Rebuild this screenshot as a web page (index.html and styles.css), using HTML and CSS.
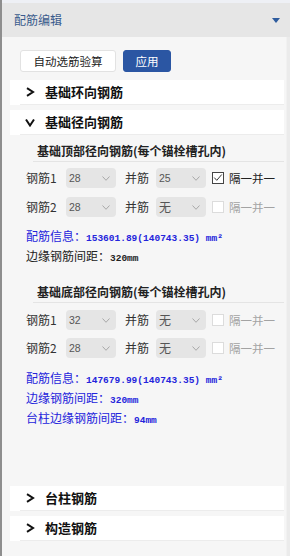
FILE: index.html
```html
<!DOCTYPE html>
<html lang="zh">
<head>
  <meta charset="UTF-8">
  <title>配筋编辑</title>
  <link rel="stylesheet" href="styles.css">
</head>
<body>
  <div class="frame">
    <div class="top-strip"></div>

    <!-- パネルヘッダー -->
    <div class="panel-head">
      <span class="panel-title">配筋编辑</span>
      <svg class="panel-caret" viewBox="0 0 8 5" width="8" height="5"><path d="M0 0H8L4 5Z" fill="currentColor"/></svg>
    </div>

    <div class="panel-wrap">
      <div class="panel-body">
        <div class="toolbar">
          <button class="btn">自动选筋验算</button>
          <button class="btn btn-primary">应用</button>
        </div>

        <!-- 基础环向钢筋 -->
        <div class="sec">
          <div class="sec-head">
            <div class="sec-title">
              <svg class="chev" viewBox="0 0 9 10" width="9" height="10"><polyline points="1.5,1.2 7.5,5 1.5,8.8" fill="none" stroke="currentColor" stroke-width="2"/></svg>
              <span>基础环向钢筋</span>
            </div>
          </div>
        </div>

        <!-- 基础径向钢筋 -->
        <div class="sec">
          <div class="sec-head">
            <div class="sec-title">
              <svg class="chev" viewBox="0 0 10 9" width="10" height="9"><polyline points="1,1.5 5,7.5 9,1.5" fill="none" stroke="currentColor" stroke-width="2"/></svg>
              <span>基础径向钢筋</span>
            </div>
          </div>
          <div class="sec-body">
            <div class="sub-head">基础顶部径向钢筋(每个锚栓槽孔内)</div>
            <div class="form-row first">
              <span class="lbl">钢筋1</span>
              <div class="sel"><span class="val">28</span><svg viewBox="0 0 8 5" width="8" height="5"><polyline points="0.5,0.5 4,4.3 7.5,0.5" fill="none" stroke="#a8a8a8"/></svg></div>
              <span class="lbl2">并筋</span>
              <div class="sel"><span class="val">25</span><svg viewBox="0 0 8 5" width="8" height="5"><polyline points="0.5,0.5 4,4.3 7.5,0.5" fill="none" stroke="#a8a8a8"/></svg></div>
              <span class="chk on"><svg viewBox="0 0 12 12" width="10" height="10"><polyline points="1.5,5.5 4.5,8.8 10.5,1.8" fill="none" stroke="#333" stroke-width="1.2"/></svg></span>
              <span class="chk-text">隔一并一</span>
            </div>
            <div class="form-row">
              <span class="lbl">钢筋2</span>
              <div class="sel"><span class="val">28</span><svg viewBox="0 0 8 5" width="8" height="5"><polyline points="0.5,0.5 4,4.3 7.5,0.5" fill="none" stroke="#a8a8a8"/></svg></div>
              <span class="lbl2">并筋</span>
              <div class="sel"><span class="val cn">无</span><svg viewBox="0 0 8 5" width="8" height="5"><polyline points="0.5,0.5 4,4.3 7.5,0.5" fill="none" stroke="#a8a8a8"/></svg></div>
              <span class="chk"></span>
              <span class="chk-text off">隔一并一</span>
            </div>
            <div class="info blue first">配筋信息：<span class="num">153601.89(140743.35) mm²</span></div>
            <div class="info">边缘钢筋间距：<span class="num">320mm</span></div>

            <div class="sub-head second">基础底部径向钢筋(每个锚栓槽孔内)</div>
            <div class="form-row first">
              <span class="lbl">钢筋1</span>
              <div class="sel"><span class="val">32</span><svg viewBox="0 0 8 5" width="8" height="5"><polyline points="0.5,0.5 4,4.3 7.5,0.5" fill="none" stroke="#a8a8a8"/></svg></div>
              <span class="lbl2">并筋</span>
              <div class="sel"><span class="val cn">无</span><svg viewBox="0 0 8 5" width="8" height="5"><polyline points="0.5,0.5 4,4.3 7.5,0.5" fill="none" stroke="#a8a8a8"/></svg></div>
              <span class="chk"></span>
              <span class="chk-text off">隔一并一</span>
            </div>
            <div class="form-row tight">
              <span class="lbl">钢筋2</span>
              <div class="sel"><span class="val">28</span><svg viewBox="0 0 8 5" width="8" height="5"><polyline points="0.5,0.5 4,4.3 7.5,0.5" fill="none" stroke="#a8a8a8"/></svg></div>
              <span class="lbl2">并筋</span>
              <div class="sel"><span class="val cn">无</span><svg viewBox="0 0 8 5" width="8" height="5"><polyline points="0.5,0.5 4,4.3 7.5,0.5" fill="none" stroke="#a8a8a8"/></svg></div>
              <span class="chk"></span>
              <span class="chk-text off">隔一并一</span>
            </div>
            <div class="info blue first low">配筋信息：<span class="num">147679.99(140743.35) mm²</span></div>
            <div class="info blue">边缘钢筋间距：<span class="num">320mm</span></div>
            <div class="info blue">台柱边缘钢筋间距：<span class="num">94mm</span></div>
          </div>
        </div>

        <!-- 台柱钢筋 -->
        <div class="sec">
          <div class="sec-head">
            <div class="sec-title">
              <svg class="chev" viewBox="0 0 9 10" width="9" height="10"><polyline points="1.5,1.2 7.5,5 1.5,8.8" fill="none" stroke="currentColor" stroke-width="2"/></svg>
              <span>台柱钢筋</span>
            </div>
          </div>
        </div>

        <!-- 构造钢筋 -->
        <div class="sec">
          <div class="sec-head">
            <div class="sec-title">
              <svg class="chev" viewBox="0 0 9 10" width="9" height="10"><polyline points="1.5,1.2 7.5,5 1.5,8.8" fill="none" stroke="currentColor" stroke-width="2"/></svg>
              <span>构造钢筋</span>
            </div>
          </div>
        </div>
      </div>
      <div class="scroll-track"></div>
    </div>
  </div>
</body>
</html>
```

FILE: styles.css
```css
/* リセット */
*, *::before, *::after { margin:0; padding:0; box-sizing:border-box; }
html, body { width:290px; height:556px; overflow:hidden; }
body {
  font-family:"Noto Sans CJK SC","Liberation Sans",sans-serif;
  font-size:12px; color:#222; background:#f6f6f6;
}

/* 外枠 */
.frame {
  height:556px; border-left:2px solid #8e8e8e;
  display:flex; flex-direction:column;
}
.top-strip { height:3px; flex-shrink:0; background:#eef0f5; }

/* ヘッダー */
.panel-head {
  height:34px; flex-shrink:0; background:#e6e6e6;
  display:flex; align-items:center; justify-content:space-between;
  padding:0 10px 0 12px;
}
.panel-title { font-size:12px; line-height:16px; color:#3a5b8c; }
.panel-caret { color:#2e5c9e; margin-top:1px; }

/* 本体 */
.panel-wrap { flex:1; display:flex; min-height:0; }
.panel-body { flex:1; background:#f6f6f6; padding-top:13px; overflow:hidden; }
.scroll-track { width:4px; background:#ebebeb; border-left:1px solid #f1f1f1; }

/* ボタン */
.toolbar { display:flex; gap:7px; padding-left:18px; margin-bottom:8px; height:22px; }
.btn {
  height:22px; width:96px; border:1px solid #e2e2e2; border-radius:3px;
  background:#fff; font-family:inherit; font-size:11.5px; line-height:14px; color:#222;
}
.btn-primary {
  width:48px; background:#2b56a3; border-color:#2b56a3; color:#fff;
}

/* セクション */
.sec { margin:5px 2px 0 8px; }
.sec-head { background:#fff; padding-left:10px; }
.sec-title {
  height:25px; border-bottom:1px solid #ececec;
  display:flex; align-items:center; padding-left:5px;
  font-size:13px; line-height:16px; font-weight:bold; color:#111;
}
.chev { color:#111; width:10px; margin-right:10px; }

.sec-body { padding:0 0 53px 16px; }
.sub-head {
  height:27px; margin-left:7px; padding:8px 0 0 4px; line-height:16px;
  border-bottom:1px solid #e4e4e4;
  font-size:12px; font-weight:bold; color:#222;
}
.sub-head.second { margin-top:10px; }

/* 入力行 */
.form-row { display:flex; align-items:center; height:20px; margin-top:9px; line-height:16px; }
.form-row.first { margin-top:6px; }
.sub-head.second + .form-row.first { margin-top:7px; }
.form-row.tight { margin-top:8px; }
.lbl { width:40px; color:#333; }
.lbl2 { width:31px; padding-left:9px; box-sizing:content-box; color:#333; }
.sel {
  width:50px; height:20px; background:#e5e5e5; border-radius:4px;
  display:flex; align-items:center; justify-content:space-between;
  padding:0 6px 0 3px;
}
.val { font-family:"Liberation Sans",sans-serif; font-size:10.5px; color:#555; }
.val.cn { font-family:"Noto Sans CJK SC",sans-serif; font-size:12px; }
.lbl2 + .sel { margin-right:6px; }
.chk {
  width:12px; height:12px; border:1px solid #dcdcdc; background:#fff;
  display:flex; align-items:center; justify-content:center;
}
.chk.on { border-color:#444; }
.chk-text { margin-left:5px; font-size:11.5px; color:#222; }
.chk-text.off { color:#a3a3a3; }

/* 情報 */
.info { height:20px; line-height:20px; font-size:12px; color:#222; overflow:hidden; }
.info.first { margin-top:9px; }
.info.first.low { margin-top:10px; }
.info.blue { color:#2424dc; }
.num { font-family:"Liberation Mono",monospace; font-size:9.5px; font-weight:bold; line-height:1; }
```
